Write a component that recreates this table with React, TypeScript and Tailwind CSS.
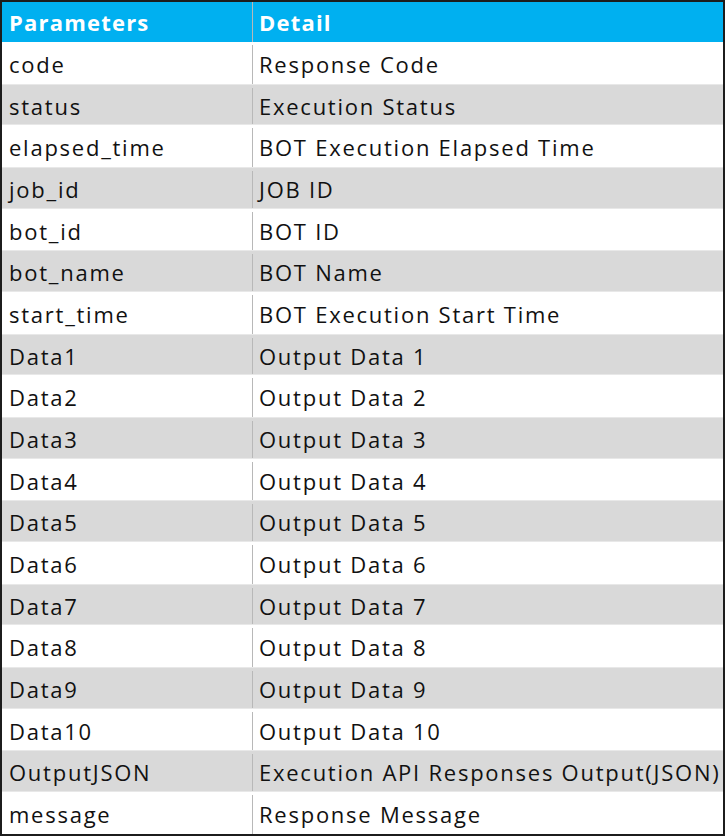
const rows: [string, string][] = [
  ["code", "Response Code"],
  ["status", "Execution Status"],
  ["elapsed_time", "BOT Execution Elapsed Time"],
  ["job_id", "JOB ID"],
  ["bot_id", "BOT ID"],
  ["bot_name", "BOT Name"],
  ["start_time", "BOT Execution Start Time"],
  ["Data1", "Output Data 1"],
  ["Data2", "Output Data 2"],
  ["Data3", "Output Data 3"],
  ["Data4", "Output Data 4"],
  ["Data5", "Output Data 5"],
  ["Data6", "Output Data 6"],
  ["Data7", "Output Data 7"],
  ["Data8", "Output Data 8"],
  ["Data9", "Output Data 9"],
  ["Data10", "Output Data 10"],
  ["OutputJSON", "Execution API Responses Output(JSON)"],
  ["message", "Response Message"],
];

export default function App() {
  return (
    <div className="w-[727px] h-[837px] bg-white">
      <div
        className="w-[725px] border-2 border-[#1c1c1c] text-[22px] text-[#111] tracking-[1.75px]"
        style={{ fontFamily: '"Open Sans", "Noto Sans CJK JP", sans-serif' }}
      >
        <div className="flex h-[40px] bg-[#00b0f0] text-white font-bold tracking-[1.2px]">
          <div className="w-[251px] border-r border-[#b8b8b8] pl-[7px] flex items-center">Parameters</div>
          <div className="flex-1 pl-[6px] flex items-center">Detail</div>
        </div>
        {rows.map(([p, d], i) => (
          <div
            key={p}
            className={`flex h-[41.68px] pt-[3px] ${i % 2 === 1 ? "bg-[#d9d9d9] border-y border-[#e8e8e8]" : "bg-white"}`}
          >
            <div className="w-[251px] border-r border-[#b8b8b8] pl-[7px] flex items-center">{p}</div>
            <div className="flex-1 pl-[6px] flex items-center">{d}</div>
          </div>
        ))}
      </div>
    </div>
  );
}
